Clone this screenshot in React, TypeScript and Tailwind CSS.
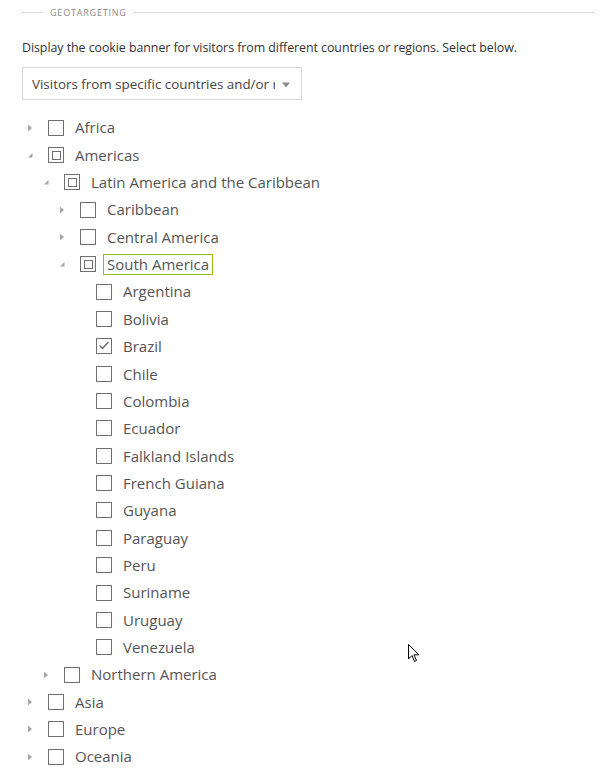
import React from "react";

type Node = { label: string; level: number; state: "none" | "partial" | "checked"; toggle: "open" | "closed" | "leaf"; focus?: boolean };

const rows: Node[] = [
  { label: "Africa", level: 0, state: "none", toggle: "closed" },
  { label: "Americas", level: 0, state: "partial", toggle: "open" },
  { label: "Latin America and the Caribbean", level: 1, state: "partial", toggle: "open" },
  { label: "Caribbean", level: 2, state: "none", toggle: "closed" },
  { label: "Central America", level: 2, state: "none", toggle: "closed" },
  { label: "South America", level: 2, state: "partial", toggle: "open", focus: true },
  { label: "Argentina", level: 3, state: "none", toggle: "leaf" },
  { label: "Bolivia", level: 3, state: "none", toggle: "leaf" },
  { label: "Brazil", level: 3, state: "checked", toggle: "leaf" },
  { label: "Chile", level: 3, state: "none", toggle: "leaf" },
  { label: "Colombia", level: 3, state: "none", toggle: "leaf" },
  { label: "Ecuador", level: 3, state: "none", toggle: "leaf" },
  { label: "Falkland Islands", level: 3, state: "none", toggle: "leaf" },
  { label: "French Guiana", level: 3, state: "none", toggle: "leaf" },
  { label: "Guyana", level: 3, state: "none", toggle: "leaf" },
  { label: "Paraguay", level: 3, state: "none", toggle: "leaf" },
  { label: "Peru", level: 3, state: "none", toggle: "leaf" },
  { label: "Suriname", level: 3, state: "none", toggle: "leaf" },
  { label: "Uruguay", level: 3, state: "none", toggle: "leaf" },
  { label: "Venezuela", level: 3, state: "none", toggle: "leaf" },
  { label: "Northern America", level: 1, state: "none", toggle: "closed" },
  { label: "Asia", level: 0, state: "none", toggle: "closed" },
  { label: "Europe", level: 0, state: "none", toggle: "closed" },
  { label: "Oceania", level: 0, state: "none", toggle: "closed" },
];

const pad = ["pl-[24px]", "pl-[40px]", "pl-[56px]", "pl-[72px]"];

function Toggle({ t }: { t: Node["toggle"] }) {
  if (t === "leaf") return <span className="w-[24px] shrink-0" />;
  return (
    <span className="w-[24px] h-[16px] shrink-0 flex items-center">
      {t === "closed" ? (
        <svg width="10" height="10" viewBox="0 0 10 10" className="ml-[1px]">
          <path d="M3 1.5 L7 5 L3 8.5 Z" fill="#a6a6a6" />
        </svg>
      ) : (
        <svg width="10" height="10" viewBox="0 0 10 10" className="ml-[1px]">
          <path d="M7.5 3 L7.5 7.5 L3 7.5 Z" fill="#a6a6a6" />
        </svg>
      )}
    </span>
  );
}

function Box({ s }: { s: Node["state"] }) {
  return (
    <span className="w-[16px] h-[16px] shrink-0 border border-[#707070] bg-white flex items-center justify-center">
      {s === "partial" && <span className="w-[9px] h-[9px] border border-[#707070]" />}
      {s === "checked" && (
        <svg width="14" height="14" viewBox="0 0 14 14">
          <path d="M2.5 6.5 L5.5 9.5 L11.5 3" fill="none" stroke="#6a6a6a" strokeWidth="1.3" />
        </svg>
      )}
    </span>
  );
}

export default function App() {
  return (
    <div className="relative w-[616px] h-[770px] bg-white overflow-hidden" style={{ fontFamily: '"Open Sans", "Noto Sans", sans-serif' }}>
      <div className="pl-[22px] pr-[22px] pt-[5px]">
        <div className="flex items-center h-[14px]">
          <span className="w-[21px] h-px bg-[#dcdcdc]" />
          <span className="px-[7px] text-[9px] tracking-[0.8px] text-[#8a8a8a] leading-none">GEOTARGETING</span>
          <span className="flex-1 h-px bg-[#dcdcdc]" />
        </div>
        <p className="mt-[21px] text-[12.4px] text-[#333] leading-[16px] tracking-[-0.05px]">
          Display the cookie banner for visitors from different countries or regions. Select below.
        </p>
        <div className="mt-[11px] w-[280px] h-[33px] border border-[#d5d5d5] flex items-center pl-[9px] pr-[10px]">
          <span className="flex-1 overflow-hidden whitespace-nowrap text-[13.4px] text-[#444] pt-[2px]">Visitors from specific countries and/or regions</span>
          <svg width="10" height="8" viewBox="0 0 10 8" className="ml-[6px] mt-[2px]">
            <path d="M1 1.5 L9 1.5 L5 6.5 Z" fill="#8a8a8a" />
          </svg>
        </div>
      </div>
      <div className="mt-[14px]">
        {rows.map((r, i) => (
          <div key={i} className={`flex items-center h-[27.35px] ${pad[r.level]}`}>
            <Toggle t={r.toggle} />
            <Box s={r.state} />
            {r.focus ? (
              <span className="ml-[7px] h-[21px] border border-[#92be16] px-[3px] flex items-center text-[15px] text-[#555] whitespace-nowrap">{r.label}</span>
            ) : (
              <span className="ml-[11px] text-[15px] text-[#555] whitespace-nowrap">{r.label}</span>
            )}
          </div>
        ))}
      </div>
      <svg className="absolute left-[408px] top-[644px]" width="13" height="20" viewBox="0 0 13 20">
        <path d="M0.5 0.5 L0.5 15 L4 11.5 L6.5 17.5 L8.5 16.6 L6 10.8 L11 10.8 Z" fill="#fff" stroke="#000" strokeWidth="1" strokeLinejoin="miter" />
      </svg>
    </div>
  );
}
